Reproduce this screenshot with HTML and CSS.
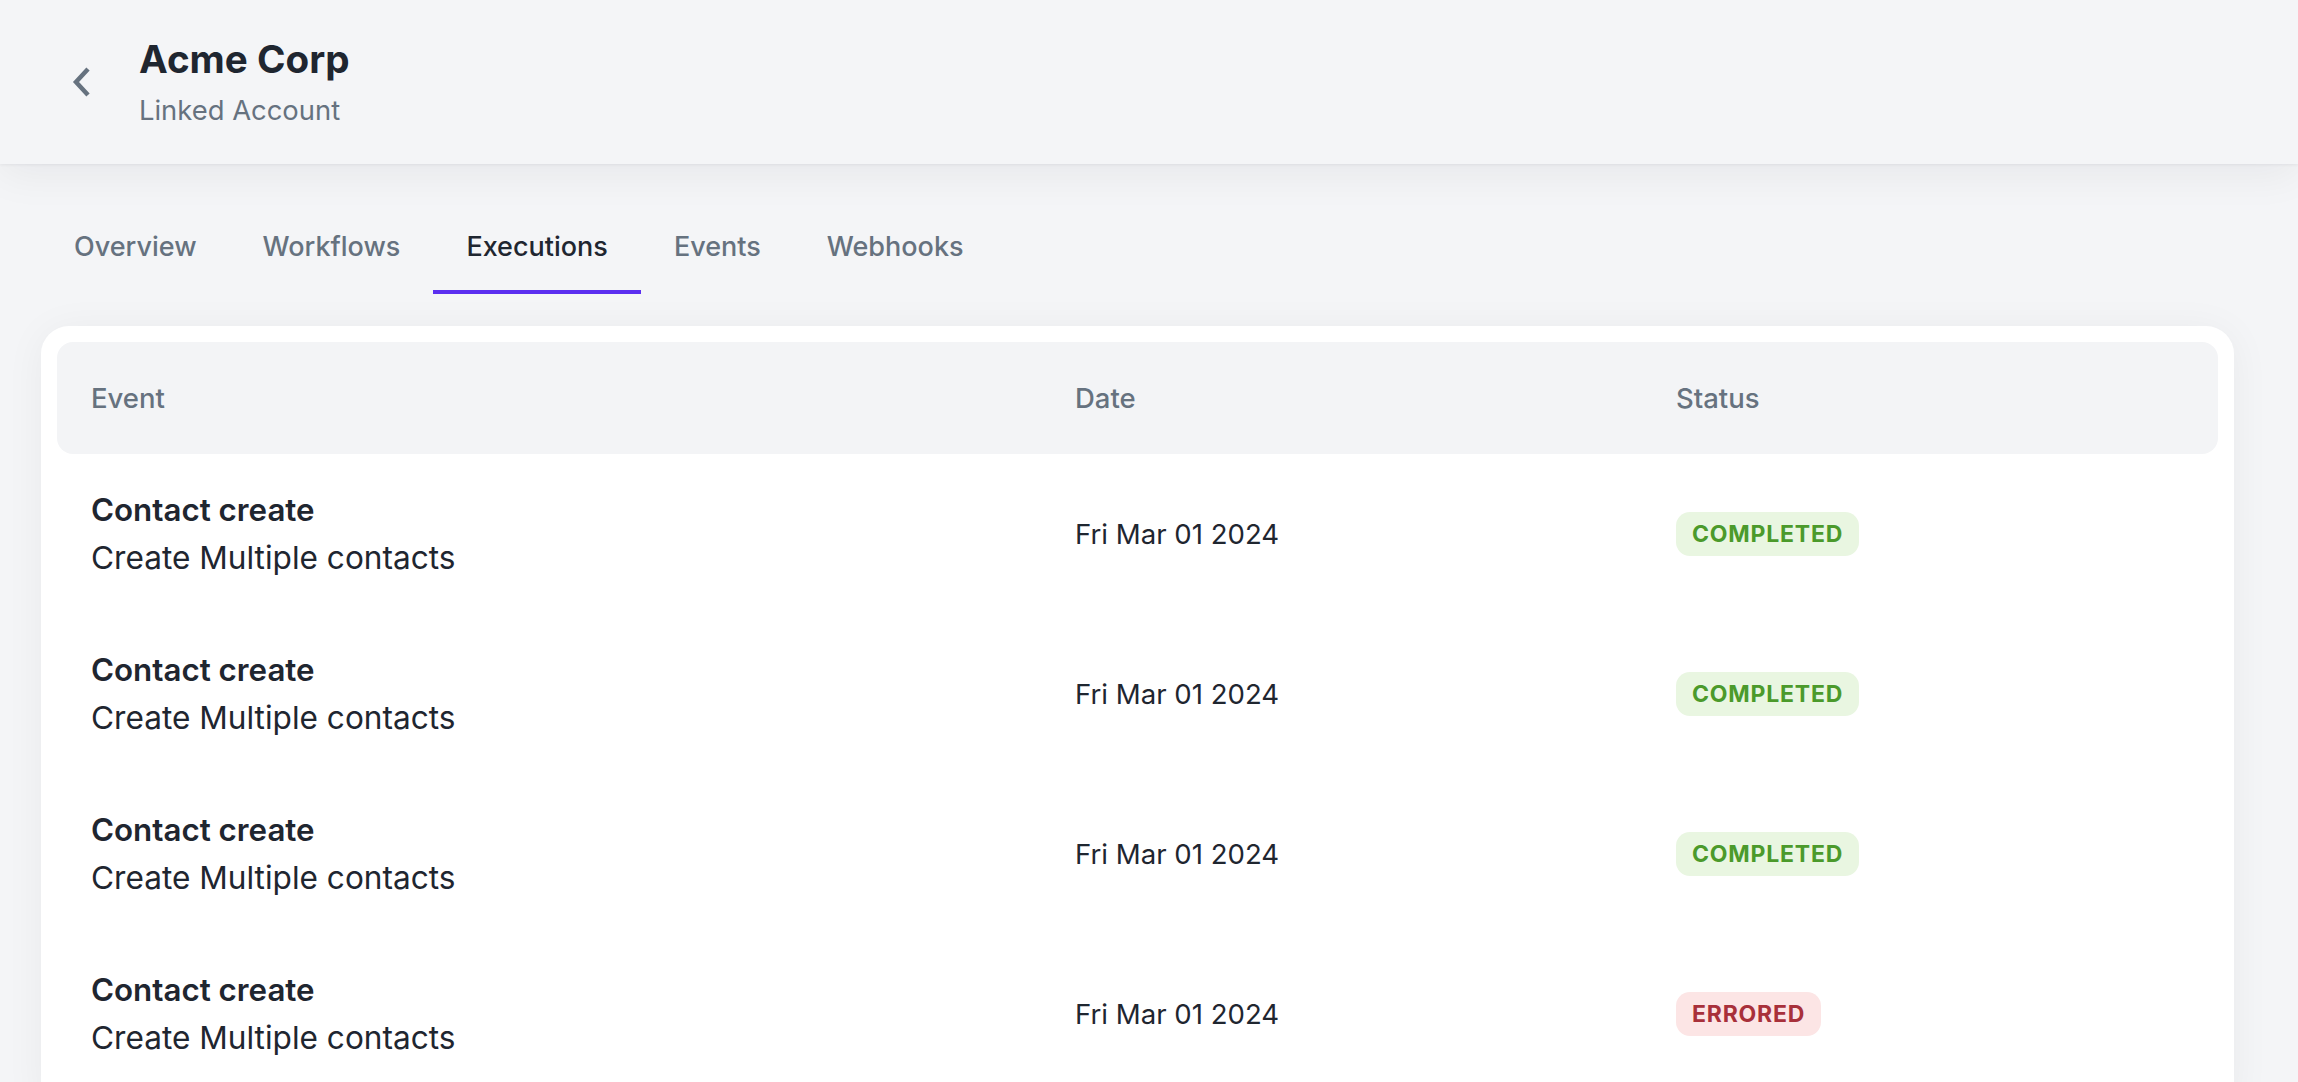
FILE: index.html
```html
<!DOCTYPE html>
<html lang="en">
<head>
<meta charset="utf-8">
<title>Acme Corp - Executions</title>
<link rel="stylesheet" href="styles.css">
</head>
<body>
<header class="topbar">
  <button class="back" aria-label="Back">
    <svg width="24" height="36" viewBox="0 0 24 36"><path d="M18 5 L6 18 L18 31" fill="none" stroke="#66727f" stroke-width="4.5" stroke-linecap="butt" stroke-linejoin="miter"/></svg>
  </button>
  <div class="titles">
    <h1 class="title">Acme Corp</h1>
    <div class="subtitle">Linked Account</div>
  </div>
</header>
<main class="main">
  <nav class="tabs">
    <a class="tab">Overview</a>
    <a class="tab">Workflows</a>
    <a class="tab active">Executions</a>
    <a class="tab">Events</a>
    <a class="tab">Webhooks</a>
  </nav>
  <section class="card">
    <div class="thead">
      <div class="th">Event</div>
      <div class="th">Date</div>
      <div class="th">Status</div>
    </div>
    <div class="row">
      <div class="event"><div class="ename">Contact create</div><div class="edesc">Create Multiple contacts</div></div>
      <div class="date">Fri Mar 01 2024</div>
      <div class="status"><span class="badge ok">COMPLETED</span></div>
    </div>
    <div class="row">
      <div class="event"><div class="ename">Contact create</div><div class="edesc">Create Multiple contacts</div></div>
      <div class="date">Fri Mar 01 2024</div>
      <div class="status"><span class="badge ok">COMPLETED</span></div>
    </div>
    <div class="row">
      <div class="event"><div class="ename">Contact create</div><div class="edesc">Create Multiple contacts</div></div>
      <div class="date">Fri Mar 01 2024</div>
      <div class="status"><span class="badge ok">COMPLETED</span></div>
    </div>
    <div class="row">
      <div class="event"><div class="ename">Contact create</div><div class="edesc">Create Multiple contacts</div></div>
      <div class="date">Fri Mar 01 2024</div>
      <div class="status"><span class="badge err">ERRORED</span></div>
    </div>
  </section>
</main>
</body>
</html>
```
FILE: styles.css
```css
* { box-sizing: border-box; }
html, body { margin: 0; padding: 0; }
body {
  background: #f4f5f7;
  font-family: Inter, "Noto Sans", "Liberation Sans", sans-serif;
  color: #1f2933;
  overflow: hidden;
}
.topbar {
  height: 164px;
  background: #f4f5f7;
  display: flex;
  align-items: center;
  padding-left: 70px;
  position: relative;
  z-index: 2;
  box-shadow: 0 1px 3px rgba(17, 24, 39, 0.06), 0 10px 40px rgba(17, 24, 39, 0.06);
}
.back {
  background: none;
  border: 0;
  padding: 0;
  margin: 0 45px 0 0;
  width: 24px;
  height: 36px;
  display: flex;
  cursor: pointer;
}
.titles { display: flex; flex-direction: column; }
.title {
  margin: 0;
  font-size: 38.6px;
  line-height: 48px;
  font-weight: 700;
  color: #1f2630;
}
.subtitle {
  font-size: 27.4px;
  line-height: 40px;
  color: #66727f;
  margin-top: 7px;
}
.main {
  padding: 42px 64px 0 41px;
}
.tabs {
  display: flex;
}
.tab {
  font-size: 27px;
  line-height: 34px;
  font-weight: 500;
  color: #66727f;
  padding: 24px 33px 26px;
  border-bottom: 4px solid transparent;
}
.tab.active {
  color: #1f2630;
  border-bottom-color: #5b2ff0;
}
.card {
  margin-top: 32px;
  background: #ffffff;
  border-radius: 28px;
  padding: 16px;
  box-shadow: 0 4px 40px rgba(17, 24, 39, 0.05);
}
.thead, .row {
  display: grid;
  grid-template-columns: 984px 601px 1fr;
  align-items: center;
}
.thead {
  height: 112px;
  background: #f3f4f6;
  border-radius: 16px;
}
.th {
  padding-left: 34px;
  font-size: 27.5px;
  font-weight: 500;
  color: #66727f;
}
.row { height: 160px; }
.event, .date, .status { padding-left: 34px; }
.ename {
  font-size: 31.3px;
  line-height: 48px;
  font-weight: 600;
  color: #1f2630;
}
.edesc {
  font-size: 31.6px;
  line-height: 48px;
  color: #1f2630;
}
.date {
  font-size: 27.6px;
  color: #1f2630;
}
.status { padding-left: 34px; display: flex; }
.badge {
  display: inline-block;
  height: 44px;
  line-height: 44px;
  padding: 0 16px;
  border-radius: 14px;
  font-size: 23px;
  font-weight: 700;
  letter-spacing: 0.8px;
}
.badge.ok { background: #e9f6e1; color: #4b9a2b; }
.badge.err { background: #fce5e5; color: #a8303a; }
```
